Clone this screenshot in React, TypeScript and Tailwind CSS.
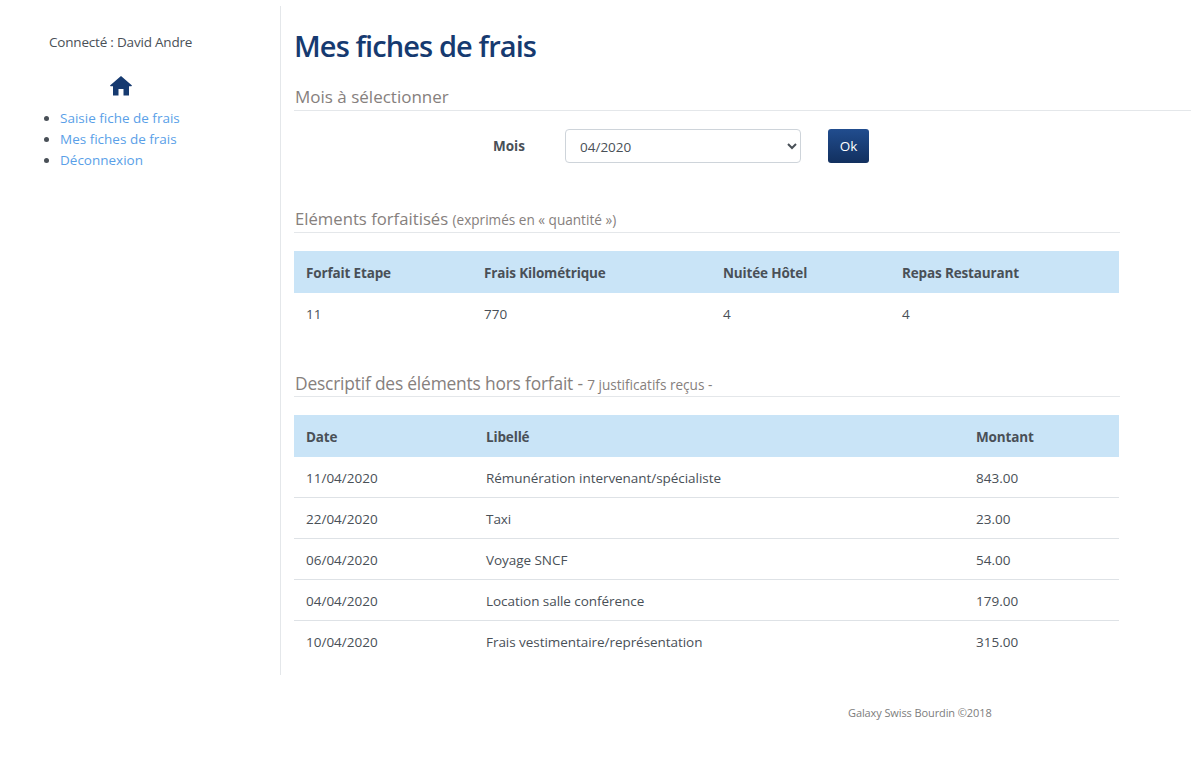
const forfaits = [
  { label: 'Forfait Etape', value: '11', width: 'w-[178px]' },
  { label: 'Frais Kilométrique', value: '770', width: 'w-[239px]' },
  { label: 'Nuitée Hôtel', value: '4', width: 'w-[179px]' },
  { label: 'Repas Restaurant', value: '4', width: 'w-[229px]' },
];

const horsForfait = [
  { date: '11/04/2020', libelle: 'Rémunération intervenant/spécialiste', montant: '843.00' },
  { date: '22/04/2020', libelle: 'Taxi', montant: '23.00' },
  { date: '06/04/2020', libelle: 'Voyage SNCF', montant: '54.00' },
  { date: '04/04/2020', libelle: 'Location salle conférence', montant: '179.00' },
  { date: '10/04/2020', libelle: 'Frais vestimentaire/représentation', montant: '315.00' },
];

export default function App() {
  return (
    <div className="min-h-[779px] bg-white pt-[6px] text-[13.5px] text-[#495057] font-['Open_Sans','Noto_Sans',sans-serif]">
      <div className="flex h-[669px]">
        {/* Sidebar */}
        <aside className="w-[281px] shrink-0 border-r border-[#e4e7ea]">
          <p className="mt-[26px] ml-[49px] leading-[20px] tracking-[-0.2px]">Connecté : David Andre</p>
          <div className="mt-[24px] flex w-[241px] justify-center">
            <svg viewBox="0 0 22 20" className="h-[20px] w-[22px] fill-[#163a70]">
              <path d="M11 0 L22 9.5 L21.4 10.2 L19 10.2 L19 19.5 L13.5 19.5 L13.5 13 L8.5 13 L8.5 19.5 L3 19.5 L3 10.2 L0.6 10.2 L0 9.5 Z" />
            </svg>
          </div>
          <ul className="mt-[12px] ml-[40px] list-disc pl-[20px] leading-[21px] marker:text-[#495057]">
            <li><a className="text-[#5a9fe8]">Saisie fiche de frais</a></li>
            <li><a className="text-[#5a9fe8]">Mes fiches de frais</a></li>
            <li><a className="text-[#5a9fe8]">Déconnexion</a></li>
          </ul>
        </aside>

        {/* Main */}
        <main className="flex-1 pl-[13px]">
          <h1 className="mt-[21px] text-[29px] leading-[38px] font-semibold tracking-[-0.9px] text-[#163a70]">Mes fiches de frais</h1>

          <h2 className="mt-[20px] border-b border-[#e4e7ea] pb-[2px] pl-[1px] text-[17px] leading-[23px] text-[#86807d]">Mois à sélectionner</h2>

          <div className="mt-[18px] flex items-center">
            <label className="ml-[199px] w-[72px] pt-[1px] font-bold">Mois</label>
            <select className="h-[34px] w-[236px] rounded-[4px] border border-[#ced4da] bg-white pt-[1px] pl-[10px] text-[13.5px] text-[#495057]" defaultValue="04/2020">
              <option>04/2020</option>
            </select>
            <button className="ml-[27px] h-[34px] w-[41px] rounded-[3px] bg-gradient-to-b from-[#214d8f] to-[#12305f] text-[13.5px] text-white">Ok</button>
          </div>

          <h2 className="mt-[44px] mr-[71px] border-b border-[#e4e7ea] pl-[1px] text-[16.7px] leading-[24px] text-[#86807d]">
            Eléments forfaitisés <small className="text-[13.6px]">(exprimés en « quantité »)</small>
          </h2>

          <table className="mt-[18px] w-[825px] table-fixed border-separate border-spacing-0">
            <thead>
              <tr className="h-[42px] bg-[#c9e4f7] text-left">
                {forfaits.map((f) => (
                  <th key={f.label} className={`${f.width} pt-[2px] pl-[12px] font-bold tracking-[-0.15px]`}>{f.label}</th>
                ))}
              </tr>
            </thead>
            <tbody>
              <tr className="h-[42px]">
                {forfaits.map((f) => (
                  <td key={f.label} className="pl-[12px]">{f.value}</td>
                ))}
              </tr>
            </tbody>
          </table>

          <h2 className="mt-[37px] mr-[71px] border-b border-[#e4e7ea] pl-[1px] text-[17.4px] leading-[22px] tracking-[-0.2px] text-[#86807d]">
            Descriptif des éléments hors forfait - <small className="text-[13.6px] tracking-normal">7 justificatifs reçus -</small>
          </h2>

          <table className="mt-[18px] w-[825px] table-fixed border-separate border-spacing-0">
            <thead>
              <tr className="h-[42px] bg-[#c9e4f7] text-left">
                <th className="w-[180px] pt-[2px] pl-[12px] font-bold tracking-[-0.15px]">Date</th>
                <th className="w-[490px] pt-[2px] pl-[12px] font-bold tracking-[-0.15px]">Libellé</th>
                <th className="pt-[2px] pl-[12px] font-bold tracking-[-0.15px]">Montant</th>
              </tr>
            </thead>
            <tbody>
              {horsForfait.map((row, i) => {
                const cell = i < horsForfait.length - 1 ? 'h-[41px] border-b border-[#dee2e6] pt-[2px] pl-[12px]' : 'h-[41px] pt-[2px] pl-[12px]';
                return (
                  <tr key={row.date}>
                    <td className={cell}>{row.date}</td>
                    <td className={`${cell} tracking-[-0.05px]`}>{row.libelle}</td>
                    <td className={cell}>{row.montant}</td>
                  </tr>
                );
              })}
            </tbody>
          </table>
        </main>
      </div>

      <footer className="mt-[30px] pl-[848px] text-[11px] leading-[16px] tracking-[-0.1px] text-[#7d7d7d]">Galaxy Swiss Bourdin ©2018</footer>
    </div>
  );
}
